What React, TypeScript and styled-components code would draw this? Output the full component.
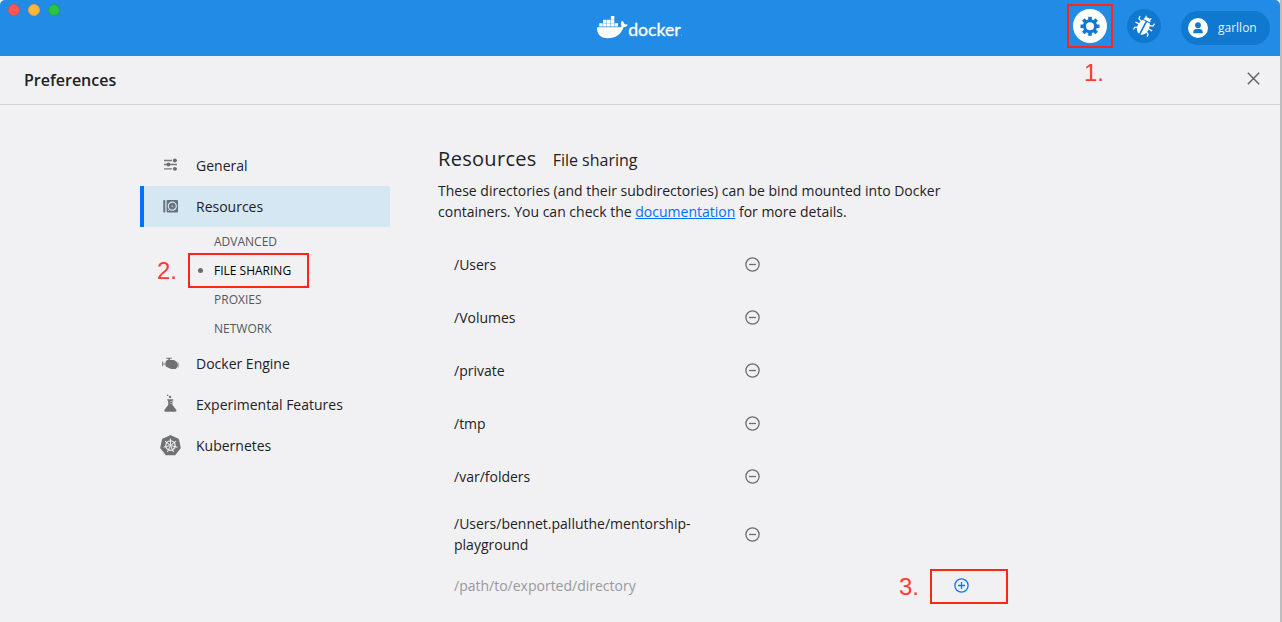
import React from 'react';
import styled, { createGlobalStyle } from 'styled-components';

const GlobalStyle = createGlobalStyle`
  * { box-sizing: border-box; }
  body { margin: 0; background: #bdbdbf; overflow: hidden; }
  #root { height: 622px; }
`;

const Window = styled.div`
  position: relative;
  width: 1280px;
  height: 622px;
  background: #f1f1f4;
  color: #1f2124;
  font: 14px/21px 'Open Sans', sans-serif;
  overflow: hidden;
`;

const TopBar = styled.header`
  height: 56px;
  display: grid;
  grid-template-columns: 1fr 88px 1fr;
  background: #228be6;
  border-radius: 5px 5px 0 0;
`;

const WindowButtons = styled.div`
  display: flex;
  gap: 8px;
  padding: 4px 8px;
`;

const WindowButton = styled.span<{ $fill: string; $edge: string }>`
  width: 12px;
  height: 12px;
  border-radius: 50%;
  background: ${(p) => p.$fill};
  border: 1px solid ${(p) => p.$edge};
`;

const Logo = styled.svg`
  width: 88px;
  height: 26px;
  margin-top: 15px;
`;

const Actions = styled.div`
  display: flex;
  justify-content: flex-end;
  align-items: flex-start;
  gap: 20px;
  padding: 9px 10px 0 0;
`;

const RoundButton = styled.button<{ $active?: boolean }>`
  width: 34px;
  height: 34px;
  padding: 0;
  border: 0;
  border-radius: 50%;
  display: grid;
  place-items: center;
  color: ${(p) => (p.$active ? '#1178d0' : '#fff')};
  background: ${(p) => (p.$active ? '#fff' : '#1178d0')};
`;

const UserPill = styled.button`
  display: flex;
  align-items: center;
  width: 89px;
  height: 34px;
  margin-top: 2px;
  padding: 0 0 0 7px;
  gap: 10px;
  border: 0;
  border-radius: 17px;
  background: #1178d0;
  color: #e4f1fc;
  font: 12px/18px 'Open Sans', sans-serif;
`;

const TitleBar = styled.div`
  height: 49px;
  display: flex;
  align-items: center;
  justify-content: space-between;
  padding: 0 20px 0 24px;
  border-bottom: 1px solid #d3d4d6;
  svg { margin-bottom: 3px; }
`;

const Title = styled.h1`
  margin: 0;
  font-size: 16px;
  font-weight: 600;
`;

const Body = styled.div`
  display: flex;
  padding: 40px 0 0 140px;
`;

const Sidebar = styled.nav`
  width: 250px;
  margin-right: 48px;
`;

const NavItem = styled.div<{ $active?: boolean }>`
  height: 41px;
  display: flex;
  align-items: center;
  gap: 14px;
  padding-left: 15px;
  border-left: 4px solid ${(p) => (p.$active ? '#0070ff' : 'transparent')};
  background: ${(p) => (p.$active ? '#d5e7f3' : 'transparent')};
  svg { margin-bottom: 2px; }
`;

const SubItem = styled.div<{ $active?: boolean }>`
  height: 29px;
  display: flex;
  align-items: center;
  padding-left: 58px;
  gap: 11px;
  font-size: 12px;
  color: ${(p) => (p.$active ? '#000' : '#55575a')};
  &::before {
    content: '';
    width: 5px;
    height: 5px;
    border-radius: 50%;
    background: ${(p) => (p.$active ? '#6b6d70' : 'transparent')};
  }
`;

const Main = styled.main`
  width: 590px;
`;

const Heading = styled.h2`
  display: flex;
  align-items: baseline;
  gap: 16px;
  margin: 0;
  font-size: 20px;
  line-height: 28px;
  font-weight: 400;
  letter-spacing: 0.3px;
`;

const SubHeading = styled.span`
  font-size: 16px;
  letter-spacing: 0;
`;

const Intro = styled.p`
  width: 520px;
  margin: 6px 0 16px;
`;

const DocLink = styled.a`
  color: #0070ff;
  text-decoration: underline;
`;

const PathRow = styled.div`
  min-height: 53px;
  display: flex;
  align-items: center;
  padding: 10px 0 10px 16px;
`;

const PathText = styled.span`
  width: 291px;
  padding-right: 41px;
`;

const NewPathRow = styled.div`
  display: flex;
  align-items: center;
  padding: 10px 0 0 16px;
`;

const PathPlaceholder = styled.span`
  width: 500px;
  color: #97999c;
`;

const Callout = styled.div<{ $x: number; $y: number; $w: number; $h: number }>`
  position: absolute;
  left: ${(p) => p.$x}px;
  top: ${(p) => p.$y}px;
  width: ${(p) => p.$w}px;
  height: ${(p) => p.$h}px;
  border: 2px solid #ff2617;
`;

const StepNumber = styled.span<{ $x: number; $y: number }>`
  position: absolute;
  left: ${(p) => p.$x}px;
  top: ${(p) => p.$y}px;
  color: #ff3b30;
  font: 24px/28px 'Liberation Sans', sans-serif;
`;

const DockerLogo = () => (
  <Logo viewBox="0 0 88 26">
    <g fill="#fff">
      <path d="M1 12.300h22.600c1-.2 1.600-.5 2.100-1-1.100-1.900-1-4.200.3-5.500 1.500.9 2.400 2 2.500 3.400 1.200-.2 2.500 0 3.300.6-.7 1.600-2.100 2.400-4.300 2.400C25 19.600 19.600 23.200 11.700 23.200 4.500 23.200.6 19.300 1 12.300z" />
      <path d="M3.200 8.300h3.500v3.300H3.200zM7.100 8.300h3.500v3.300H7.100zM11 8.300h3.500v3.300H11zM14.900 8.300h3.400v3.300h-3.400zM18.700 8.300h3.400v3.300h-3.400zM7.100 4.700h3.500V8H7.100zM11 4.700h3.500V8H11zM14.900 4.700h3.400V8h-3.400zM14.900 1.100h3.400v3.300h-3.400z" />
    </g>
    <text x="32.200" y="20.500" fill="#fff" stroke="#fff" strokeWidth=".3" fontFamily="Lato, sans-serif" fontSize="17" textLength="52.500" lengthAdjust="spacingAndGlyphs">docker</text>
    <circle cx="85.500" cy="20" r=".5" fill="#a9d2f6" />
  </Logo>
);

const GearIcon = () => (
  <svg width="20" height="20" viewBox="0 0 20 20" fill="none" stroke="currentColor">
    <circle cx="10" cy="10.300" r="5.500" strokeWidth="3" />
    {[0, 45, 90, 135, 180, 225, 270, 315].map((a) => (
      <path key={a} d="M10 .8v3.400" strokeWidth="3.600" transform={`rotate(${a} 10 10.300)`} />
    ))}
  </svg>
);

const BugIcon = () => (
  <svg width="22" height="24" viewBox="0 0 22 24">
    <g transform="rotate(28 11 12)">
      <g fill="none" stroke="#fff" strokeWidth="1.200">
        <path d="M6 9L3 7.800 2.800 5M5.500 12.500H1.500M6 16l-2.600 1.600v2.400M16 9l3-1.200.2-2.800M16.500 12.500h4M16 16l2.600 1.600v2.400M9 4L8 2M13 4l1-2" />
      </g>
      <path fill="#fff" d="M7.300 6.100a3.700 3.400 0 0 1 7.400 0zM10.200 7.100v14C7.100 20.600 5.200 17.600 5.200 13.500c0-2.500.6-4.700 1.700-6.400zM11.800 7.100v14c3.100-.5 5-3.500 5-7.600 0-2.500-.6-4.700-1.700-6.400z" />
    </g>
  </svg>
);

const UserIcon = () => (
  <svg width="20" height="20" viewBox="0 0 20 20">
    <circle cx="10" cy="10" r="10" fill="#fff" />
    <circle cx="10" cy="7.200" r="2.900" fill="#1178d0" />
    <path d="M5.300 15.300v-1.400c0-2.200 2-3.100 4.700-3.100s4.700.9 4.700 3.100v1.400z" fill="#1178d0" />
  </svg>
);

const CloseIcon = () => (
  <svg width="13" height="13" viewBox="0 0 13 13">
    <path d="M.8.800l11.400 11.400M12.200.800L.8 12.200" stroke="#626466" strokeWidth="1.500" />
  </svg>
);

const SlidersIcon = () => (
  <svg width="23" height="18" viewBox="0 0 23 18">
    <path d="M5 4.500h8M5 8.500h13M5 12.800h8M15 4.500h3M15 12.800h3" stroke="#77797b" strokeWidth="1.300" />
    <g fill="#6b6d6f">
      <circle cx="15.800" cy="4.500" r="1.900" />
      <circle cx="9.400" cy="8.500" r="1.900" />
      <circle cx="15.800" cy="12.800" r="1.900" />
    </g>
  </svg>
);

const ResourcesIcon = () => (
  <svg width="23" height="18" viewBox="0 0 23 18">
    <rect x="4.200" y="3" width="2.100" height="12.500" rx=".8" fill="#6b7880" />
    <rect x="7.600" y="3" width="11.400" height="12.500" rx="1" fill="#66727a" />
    <circle cx="13.300" cy="9.200" r="4" fill="none" stroke="#d5e7f3" strokeWidth="1.200" />
    <circle cx="13.300" cy="9.200" r="1" fill="#a9b8c2" />
    <path d="M9.200 13.900l2-2" stroke="#d5e7f3" />
  </svg>
);

const EngineIcon = () => (
  <svg width="23" height="18" viewBox="0 0 23 18" fill="#707173">
    <path d="M8.300 6h6.700l2.200 1.400.8.600v5.500l-1.400 1.500h-4.600L9 13.500 6.600 12.500V7.500z" />
    <path d="M7.200 3.700h5.600v1H7.200zM9.300 4.200h1.500V7H9.300zM3.200 7.500h.9v4.800h-.9zM4 9.400h3v1.100H4zM18.500 8.600h1v5h-1zM17.500 10.500h1.300v1.200h-1.300z" />
  </svg>
);

const FlaskIcon = () => (
  <svg width="23" height="20" viewBox="0 0 23 20" fill="#707173">
    <circle cx="8.600" cy="1.200" r=".8" />
    <circle cx="11" cy="2.900" r="1.200" />
    <path d="M8.300 5.300h6v1.300h-.8v4.300l3.700 4.900c.7 1.100.2 2-.9 2H6.400c-1.100 0-1.600-.9-.9-2l3.700-4.900V6.600h-.9z" />
    <path d="M11.200 7.400h2M11.200 9.400h2" stroke="#f1f1f4" strokeWidth=".6" />
  </svg>
);

const KubernetesIcon = () => (
  <svg width="23" height="22" viewBox="0 0 23 22">
    <g transform="translate(0 .6)">
      <path d="M11.500 1.200l7.700 3.700 1.900 8.300-5.300 6.700H7.200l-5.300-6.700 1.900-8.300z" fill="#707173" stroke="#707173" strokeWidth="1.400" strokeLinejoin="round" />
      <g fill="none" stroke="#f1f1f4" strokeWidth="1">
        <circle cx="11.500" cy="11" r="4.700" strokeWidth="1.200" />
        {[0, 51.400, 102.900, 154.300, 205.700, 257.100, 308.600].map((a) => (
          <path key={a} d="M11.500 10V3.900" transform={`rotate(${a} 11.500 11)`} />
        ))}
      </g>
      <circle cx="11.500" cy="11" r="1.100" fill="#f1f1f4" />
    </g>
  </svg>
);

const CircleIcon = ({ plus = false }: { plus?: boolean }) => (
  <svg width="15" height="15" viewBox="0 0 15 15" fill="none" stroke={plus ? '#1173f5' : '#6b6d70'} strokeWidth="1.300">
    <circle cx="7.500" cy="7.500" r="6.600" />
    <path d={plus ? 'M4 7.500h7M7.500 4v7' : 'M4 7.500h7'} />
  </svg>
);

const paths = ['/Users', '/Volumes', '/private', '/tmp', '/var/folders', '/Users/bennet.palluthe/mentorship-playground'];

export default function App() {
  return (
    <>
      <GlobalStyle />
      <Window>
        <TopBar>
          <WindowButtons>
            <WindowButton $fill="#ff5753" $edge="#d94f58" />
            <WindowButton $fill="#fdb73e" $edge="#d5a150" />
            <WindowButton $fill="#2ac544" $edge="#22a150" />
          </WindowButtons>
          <DockerLogo />
          <Actions>
            <RoundButton $active><GearIcon /></RoundButton>
            <RoundButton><BugIcon /></RoundButton>
            <UserPill><UserIcon />garllon</UserPill>
          </Actions>
        </TopBar>
        <TitleBar>
          <Title>Preferences</Title>
          <CloseIcon />
        </TitleBar>
        <Body>
          <Sidebar>
            <NavItem><SlidersIcon />General</NavItem>
            <NavItem $active><ResourcesIcon />Resources</NavItem>
            <SubItem>ADVANCED</SubItem>
            <SubItem $active>FILE SHARING</SubItem>
            <SubItem>PROXIES</SubItem>
            <SubItem>NETWORK</SubItem>
            <NavItem><EngineIcon />Docker Engine</NavItem>
            <NavItem><FlaskIcon />Experimental Features</NavItem>
            <NavItem><KubernetesIcon />Kubernetes</NavItem>
          </Sidebar>
          <Main>
            <Heading>Resources <SubHeading>File sharing</SubHeading></Heading>
            <Intro>
              These directories (and their subdirectories) can be bind mounted into Docker containers. You can check the <DocLink>documentation</DocLink> for more details.
            </Intro>
            {paths.map((path) => (
              <PathRow key={path}><PathText>{path}</PathText><CircleIcon /></PathRow>
            ))}
            <NewPathRow><PathPlaceholder>/path/to/exported/directory</PathPlaceholder><CircleIcon plus /></NewPathRow>
          </Main>
        </Body>
        <Callout $x={1067} $y={4} $w={46} $h={44} />
        <Callout $x={188} $y={253} $w={121} $h={35} />
        <Callout $x={930} $y={569} $w={78} $h={35} />
        <StepNumber $x={1084} $y={59}>1.</StepNumber>
        <StepNumber $x={157} $y={257}>2.</StepNumber>
        <StepNumber $x={899} $y={573}>3.</StepNumber>
      </Window>
    </>
  );
}
